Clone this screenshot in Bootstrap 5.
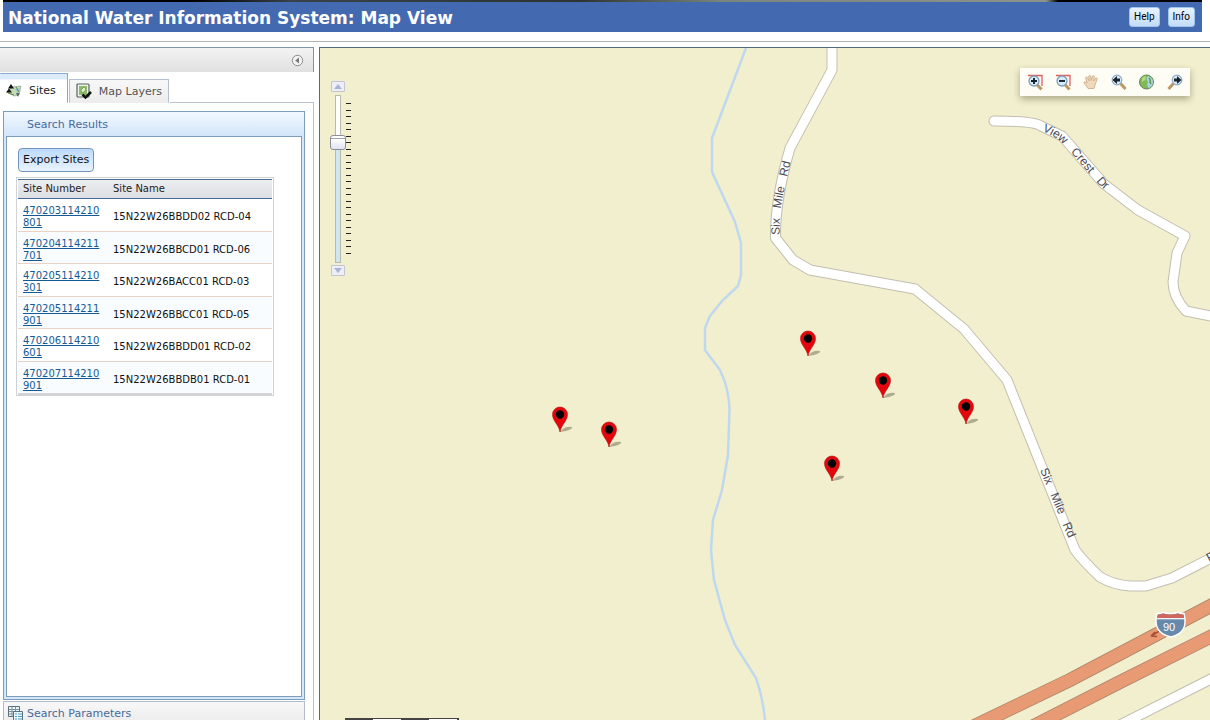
<!DOCTYPE html>
<html lang="en">
<head>
<meta charset="utf-8">
<meta name="viewport" content="width=device-width, initial-scale=1">
<title>National Water Information System: Map View</title>
<link href="https://cdn.jsdelivr.net/npm/bootstrap@5.3.0/dist/css/bootstrap.min.css" rel="stylesheet">
<style>
body{font-family:"DejaVu Sans",Verdana,sans-serif;font-size:11px;line-height:16px;color:#111;background:#fff;overflow:hidden}
.banner-photo{height:2px;background:linear-gradient(90deg,#000 16%,#39424a 24%,#2b3430 48%,#7b857f 60%,#8c928c 87%,#000 88%)}
.masthead{margin:0 8px 0 3px}
.title-bar{background:#436ab0;height:30px;padding:0 7px 0 5px}
.title-bar h1{font-size:17px;line-height:30px;padding-top:2px;font-weight:700;color:#fff}
.btn-mini{font-family:Roboto,sans-serif;font-size:10px;line-height:16px;padding:1px 4px;color:#000;border:1px solid #9fc4ea;border-radius:3px;background:linear-gradient(#e8f3ff,#c4dcf8)}
.rule-line{height:1px;background:#b4b4b4;margin-top:9px}
.work-area{margin-top:5px;min-height:0}
.side-panel{width:314px}
.side-top{height:25px;border-top:1px solid #7c93ab;border-right:1px solid #7c93ab;background:linear-gradient(#f3f3f4,#e1e1e1);padding-right:9px}
.tab-strip{height:31px}
.side-tab{border:1px solid #b4bfd0;border-bottom:0;padding:0 6px;gap:6px;color:#555;background:linear-gradient(#f7f7f7,#ededed);height:24px;text-decoration:none;margin-right:1px;border-radius:1px}
.side-tab.current{height:30px;color:#222;border-color:#8ba9ca;border-left:0;padding:5px 11px 0 6px;gap:7px;background:linear-gradient(#dcebfa 5px,#fff 6px)}
.strip-line{border-bottom:1px solid #b9c1cc}
.side-body{border-right:1px solid #b9c1cc;padding:8px 8px 0 3px;min-height:0}
.fold{border:1px solid #7b9ebd;background:#d6e6f7;padding:0 2px 2px}
.fold-head{height:24px;line-height:25px;padding-left:23px;color:#466a9c;background:linear-gradient(#f2f8ff,#d2e5fa);margin:0 -2px}
.fold-content{border:1px solid #7b9ebd;background:#fff;padding:11px 11px 0}
.fold-closed{border:1px solid #b4bcca;border-bottom:0;height:19px;margin-top:1px;padding:4px 4px 0;color:#466a9c;background:linear-gradient(#f8f8f8,#ededed);gap:4px;overflow:hidden}
.btn-export{font-size:11px;line-height:16px;padding:3px 4px;color:#111;border:1px solid #7094bc;border-radius:4px;background:linear-gradient(#bddafa,#e9f3ff)}
.grid-frame{width:258px;margin:5px 0 0 -2px;border:1px solid #cfd3d8;padding:1px 1px 0}
.sites{width:100%;font-size:10px;line-height:12px;border-collapse:separate;border-spacing:0}
.sites th{font-weight:400;height:20px;padding:0 5px;color:#222;background:linear-gradient(#eceef0,#dcdfe3);border-top:1px solid #4a6b92;border-bottom:1px solid #4a6b92}
.sites td{padding:6px 5px 2px;border-bottom:1px solid #e6d3c6;word-break:break-all}
.sites tbody tr:nth-child(even) td{padding-bottom:1px;background:#f8fcff}
.sites tbody tr:last-child td{border-bottom:2px solid #d3d3d3}
.sites th:first-child{width:90px}
.sites a{color:#155a94}
.map-pane{margin-left:5px;border-left:1px solid #4c7080;border-top:1px solid #4f6b80;background:#f2efce;min-width:0}
.map-pane>svg{position:absolute;inset:0;width:100%;height:100%}
.map-text{font-family:"Liberation Sans",Arial,sans-serif;font-size:12px;fill:#4a4a52}
.map-text .route-no{font-size:11px;fill:#fff}
.map-tools{position:absolute;right:20px;top:20px;height:28px;padding:0 6px;gap:10px;background:#fdfdf5;box-shadow:0 3px 7px rgba(60,60,30,.4)}
.btn-plain{border:0;background:none;padding:0;line-height:0}
.zoomer{position:absolute;left:10px;top:33px;width:16px}
.btn-step{width:14px;height:11px;border:1px solid #c3c4d6;border-radius:1px;background:#eeeef6;padding:0;line-height:0}
.slide-box{width:16px;height:173px}
.slide-box input{width:168px;height:16px;transform:rotate(-90deg);appearance:none;-webkit-appearance:none;background:linear-gradient(90deg,#cfe5ef 68%,#fff 68%) center/166px 4px no-repeat,linear-gradient(#b8bcae,#b8bcae) center/168px 6px no-repeat;margin:0 -76px;flex:none}
.slide-box input::-webkit-slider-thumb{-webkit-appearance:none;width:15px;height:16px;border:1px solid #8a8f9a;border-radius:3px;background:linear-gradient(270deg,#fff 2px,#9ba2b2 2px,#9ba2b2 3px,#fff 3px,#dfe3f2)}
.tick-marks{position:absolute;left:16px;top:22px}
.scale-bar{position:absolute;left:25px;bottom:0;width:114px;height:2px;background:repeating-linear-gradient(90deg,#444 0 28px,#fff 28px 56px);border-top:1px solid #444}
</style>
</head>
<body class="vh-100 d-flex flex-column">
<header>
  <div class="masthead">
    <div class="banner-photo"></div>
    <div class="title-bar d-flex align-items-center">
      <h1 class="m-0 me-auto">National Water Information System: Map View</h1>
      <button class="btn btn-mini me-2" type="button">Help</button>
      <button class="btn btn-mini" type="button">Info</button>
    </div>
  </div>
  <div class="rule-line"></div>
</header>

<main class="work-area d-flex flex-grow-1">
  <aside class="side-panel d-flex flex-column flex-shrink-0">
    <div class="side-top d-flex align-items-center justify-content-end">
      <button class="btn-plain" type="button" aria-label="Collapse panel">
        <svg width="13" height="13" viewBox="0 0 13 13"><circle cx="6.500" cy="6.500" r="5.200" fill="#f3f3f3" stroke="#8b8b8b"/><path d="M8 3.500v6L4.200 6.500z" fill="#777"/></svg>
      </button>
    </div>
    <nav class="tab-strip d-flex align-items-end" aria-label="Panels">
      <a class="side-tab current d-flex align-items-center" href="#sites" aria-current="page">
        <svg width="16" height="14" viewBox="0 0 16 14"><path d="M6 3l9-1-2 9-5 1-7-4z" fill="#c5dbb5" stroke="#87a29a" stroke-width=".7"/><path d="M9 5l5-1-2 6z" fill="#9bc4d6"/><path d="M5 0l3 4.500H2zM3 4.500l3 4H0z" fill="#111"/><path d="M2 9l6 2M10 3l3 5" stroke="#5f8b38"/><path d="M10 9h3.500l-1.500 4z" fill="#596064"/></svg>
        <span>Sites</span>
      </a>
      <a class="side-tab d-flex align-items-center" href="#layers">
        <svg width="17" height="17" viewBox="0 0 17 17"><rect x="1" y="1" width="12" height="13" rx="1" fill="#eef4ea" stroke="#55645c" stroke-width="1.200"/><path d="M3 3h8v9H3z" fill="#8fbc6c"/><path d="M5 7l3-3 2 2-2 3-2 1z" fill="#e4f1cf" stroke="#5f9440" stroke-width=".7"/><path d="M6.500 11.500l3 3L15 9" fill="none" stroke="#111" stroke-width="2.500"/></svg>
        <span>Map Layers</span>
      </a>
      <div class="strip-line flex-grow-1"></div>
    </nav>
    <div class="side-body d-flex flex-column flex-grow-1" id="sites">
      <section class="fold d-flex flex-column flex-grow-1">
        <div class="fold-head">Search Results</div>
        <div class="fold-content flex-grow-1">
          <button class="btn btn-export" type="button">Export Sites</button>
          <div class="grid-frame">
            <table class="sites">
              <thead><tr><th scope="col">Site Number</th><th scope="col">Site Name</th></tr></thead>
              <tbody>
                <tr><td><a href="#s1">470203114210801</a></td><td>15N22W26BBDD02 RCD-04</td></tr>
                <tr><td><a href="#s2">470204114211701</a></td><td>15N22W26BBCD01 RCD-06</td></tr>
                <tr><td><a href="#s3">470205114210301</a></td><td>15N22W26BACC01 RCD-03</td></tr>
                <tr><td><a href="#s4">470205114211901</a></td><td>15N22W26BBCC01 RCD-05</td></tr>
                <tr><td><a href="#s5">470206114210601</a></td><td>15N22W26BBDD01 RCD-02</td></tr>
                <tr><td><a href="#s6">470207114210901</a></td><td>15N22W26BBDB01 RCD-01</td></tr>
              </tbody>
            </table>
          </div>
        </div>
      </section>
      <section class="fold-closed d-flex flex-shrink-0">
        <svg class="flex-shrink-0" width="15" height="15" viewBox="0 0 15 15"><path d="M.5.500h11v10H.500z" fill="#eef3f4" stroke="#58717f"/><path d="M1 3.500h10M1 5.500h10M1 8h10M4 1v9M7.500 1v9" stroke="#7c95a1"/><path d="M5.500 5.500h9v9h-9z" fill="#e8f6fb" stroke="#58717f"/><path d="M7 8h2m1 0h4M7 10.500h2m1 0h4M7 13h2m1 0h4" stroke="#57a0bd"/></svg>
        <span>Search Parameters</span>
      </section>
    </div>
  </aside>

  <section class="map-pane position-relative flex-grow-1 overflow-hidden" aria-label="Map">
    <svg viewBox="320 48 890 672" preserveAspectRatio="xMinYMin slice" role="img" aria-label="Map of sampling sites near Six Mile Road">
      <defs>
        <path id="six-north" d="M779.500 235L780 216Q781 202 789 169L796 140"/>
        <path id="crest" d="M1042 131Q1058 137 1068 149L1100 186 1130 209"/>
        <path id="six-south" d="M1040 470L1070 542 1082 568"/>
        <g id="pin"><path d="M0 0Q4-6 12-5 13-3 6-1z" fill="#77775c" opacity=".55"/><path d="M0 0C-1-7-7.500-11-7.500-17.500a7.500 7.500 0 0 1 15 0C7.500-11 1-7 0 0z" fill="#e3060d" stroke="#b10b0b" stroke-width=".6"/><circle cy="-17.500" r="4.200"/></g>
      </defs>
      <path d="M746 48L712 138V172L735 222 741 243V275L738 286 722 301 710 316 705 328V350L720 370 725 382Q729 396 729.500 409L728 455 722 490 713 520 711 550 714 580 725 620 735 645 756 678Q763 698 765 720" fill="none" stroke="#bfd8ee" stroke-width="2.500"/>
      <g fill="none" stroke="#c2beb0" stroke-width="11" stroke-linejoin="round">
        <path d="M832 40V70L790 148Q775 200 775.500 238L793 260 810 270 915 289 964 329 1007 380 1075 550Q1084 562 1100 577 1114 585 1130 586H1146L1172 578 1215 556"/>
        <path d="M994 121Q1035 121 1041 126L1062 136 1104 184 1138 210 1185 236 1177 253 1173 282Q1173 297 1186 311L1215 317" stroke-linecap="round"/>
        <path d="M1110 730L1215 677"/>
      </g>
      <g fill="none" stroke="#fff" stroke-width="9" stroke-linejoin="round">
        <path d="M832 40V70L790 148Q775 200 775.500 238L793 260 810 270 915 289 964 329 1007 380 1075 550Q1084 562 1100 577 1114 585 1130 586H1146L1172 578 1215 556"/>
        <path d="M994 121Q1035 121 1041 126L1062 136 1104 184 1138 210 1185 236 1177 253 1173 282Q1173 297 1186 311L1215 317" stroke-linecap="round"/>
        <path d="M1110 730L1215 677"/>
      </g>
      <path d="M960 733L1070 680 1220 601M1020 733L1120 682 1220 632" fill="none" stroke="#a98568" stroke-width="14"/>
      <path d="M960 733L1070 680 1220 601M1020 733L1120 682 1220 632" fill="none" stroke="#e79a73" stroke-width="12.500"/>
      <path d="M1151 636l4-4m-4 4l6 .5m-6-.5l10-6" fill="none" stroke="#a95034" stroke-width="1.500"/>
      <path d="M1157 613.500Q1160 614 1163 612.500 1170 615 1178 612.500 1181 614 1184 613.500 1189 633 1171 637 1152 633 1157 613.500z" fill="#6689ac" stroke="#fff" stroke-width="1.500"/>
      <path d="M1158 614.500Q1161 614.500 1163 613.500 1170 615.500 1178 613.500 1181 614.500 1183.500 614.500L1184 618H1157.500z" fill="#cf675f"/>
      <path d="M1157 618.700h27" stroke="#fff" stroke-width="1.200"/>
      <g class="map-text">
        <text class="route-no" x="1163" y="631">90</text>
        <text><textPath href="#six-north">Six&nbsp;&nbsp; Mile&nbsp;&nbsp; Rd</textPath></text>
        <text><textPath href="#crest">View&nbsp;&nbsp; Crest&nbsp;&nbsp; Dr</textPath></text>
        <text><textPath href="#six-south">Six&nbsp;&nbsp; Mile&nbsp;&nbsp; Rd</textPath></text>
        <text transform="translate(1209 562) rotate(-28)">R</text>
      </g>
      <use href="#pin" x="808" y="356"/><use href="#pin" x="883" y="398"/><use href="#pin" x="966" y="424"/>
      <use href="#pin" x="560" y="432"/><use href="#pin" x="609" y="447"/><use href="#pin" x="832" y="481"/>
    </svg>

    <div class="zoomer d-flex flex-column align-items-center">
      <button class="btn-step" type="button" aria-label="Zoom in"><svg width="8" height="5" viewBox="0 0 8 5"><path d="M0 5l4-5 4 5z" fill="#a9b4d6"/></svg></button>
      <div class="slide-box d-flex align-items-center justify-content-center"><input type="range" min="0" max="23" value="17" aria-label="Zoom level"></div>
      <button class="btn-step" type="button" aria-label="Zoom out"><svg width="8" height="5" viewBox="0 0 8 5"><path d="M0 0h8L4 5z" fill="#a9b4d6"/></svg></button>
      <svg class="tick-marks" width="5" height="152" viewBox="0 0 5 152"><path d="M0 .5h5m-5 7h5m-5 6h5m-5 7h5m-5 6h5m-5 7h5m-5 6h5m-5 7h5m-5 6h5m-5 7h5m-5 6h5m-5 7h5m-5 6h5m-5 7h5m-5 6h5m-5 7h5m-5 6h5m-5 7h5m-5 6h5m-5 7h5m-5 6h5m-5 7h5m-5 6h5m-5 7h5" stroke="#222"/></svg>
    </div>

    <div class="map-tools d-flex align-items-center">
      <button class="btn-plain" type="button" aria-label="Zoom in to box"><svg width="18" height="18" viewBox="0 0 18 18"><path d="M2 2.500h14V13" fill="#fff3f1" stroke="#e0605c" stroke-width="1.300"/><path d="M10.500 11l5 5.500" stroke="#bd9762" stroke-width="3"/><circle cx="8" cy="8" r="5" fill="#d8ebfa" stroke="#839db8" stroke-width="1.300"/><path d="M5 8h6M8 5v6" stroke="#123" stroke-width="1.900"/></svg></button>
      <button class="btn-plain" type="button" aria-label="Zoom out to box"><svg width="18" height="18" viewBox="0 0 18 18"><path d="M2 2.500h14V13" fill="#fff3f1" stroke="#e0605c" stroke-width="1.300"/><path d="M10.500 11l5 5.500" stroke="#bd9762" stroke-width="3"/><circle cx="8" cy="8" r="5" fill="#d8ebfa" stroke="#839db8" stroke-width="1.300"/><path d="M5 8h6" stroke="#123" stroke-width="1.900"/></svg></button>
      <button class="btn-plain" type="button" aria-label="Pan"><svg width="18" height="18" viewBox="0 0 18 18"><path d="M6 15.500L1.800 9.500Q2.500 8 5 10L3.500 4.500Q4.500 3 5.500 4.500L7 8 6.800 3Q7.800 1.500 8.700 3L9.300 7.500 10.500 3Q11.700 2 12.300 3.500L11.800 8 13.800 5Q15.200 4.500 15.200 6L13 12 12 15.500z" fill="#f0d9ba" stroke="#cfae8b" stroke-width=".9"/></svg></button>
      <button class="btn-plain" type="button" aria-label="Previous extent"><svg width="18" height="18" viewBox="0 0 18 18"><path d="M10.500 10.500l5 5.500" stroke="#bd9762" stroke-width="3"/><circle cx="7" cy="7" r="4.800" fill="#d8ebfa" stroke="#91a9c0" stroke-width="1.200"/><path d="M2.500 7l4.500-4v2.500h3v3H7V11z" fill="#182630"/></svg></button>
      <button class="btn-plain" type="button" aria-label="Full extent"><svg width="18" height="18" viewBox="0 0 18 18"><circle cx="8.500" cy="9" r="7" fill="#7fb958" stroke="#64865a"/><path d="M10 3q5 2 5 6t-4 6q-3-2-1-6-3-3 0-6z" fill="#a7d2e4"/><path d="M11 5q2 2 1 4l1 2" fill="none" stroke="#5f9b4b" stroke-width="1.500"/><path d="M4 5q2-2 4-2L7 7 4 9z" fill="#b6da86"/></svg></button>
      <button class="btn-plain" type="button" aria-label="Next extent"><svg width="18" height="18" viewBox="0 0 18 18"><path d="M7.500 10.500l-5 5.500" stroke="#bd9762" stroke-width="3"/><circle cx="11" cy="7" r="4.800" fill="#d8ebfa" stroke="#91a9c0" stroke-width="1.200"/><path d="M15.500 7L11 3v2.500H8v3h3V11z" fill="#182630"/></svg></button>
    </div>
    <div class="scale-bar"></div>
  </section>
</main>
<script src="https://cdn.jsdelivr.net/npm/bootstrap@5.3.0/dist/js/bootstrap.bundle.min.js"></script>
</body>
</html>
